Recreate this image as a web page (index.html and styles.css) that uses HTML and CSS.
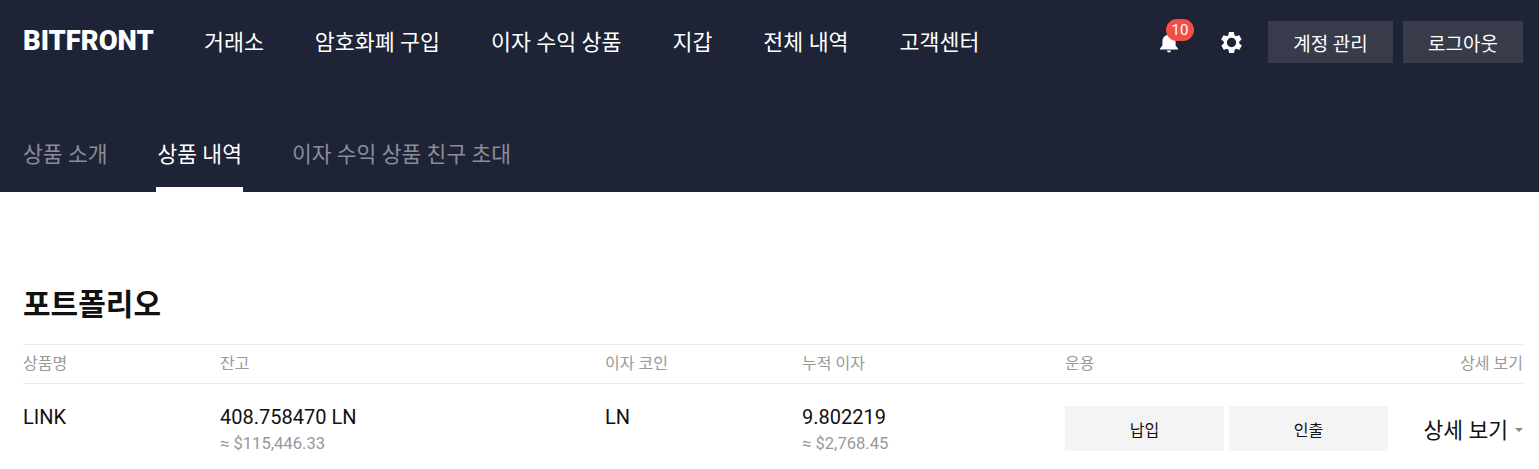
FILE: index.html
```html
<!DOCTYPE html>
<html lang="ko">
<head>
  <meta charset="UTF-8">
  <title>BITFRONT</title>
  <link rel="stylesheet" href="styles.css">
</head>
<body>

<header class="header">
  <div class="topbar">
    <a class="logo">BITFRONT</a>
    <nav class="mainnav">
      <a>거래소</a>
      <a>암호화폐 구입</a>
      <a>이자 수익 상품</a>
      <a>지갑</a>
      <a>전체 내역</a>
      <a>고객센터</a>
    </nav>
    <div class="tools">
      <div class="bell">
        <svg width="22" height="22" viewBox="0 0 22 22"><path fill="#fff" d="M11 1.5a2 2 0 0 1 2 2v.6c3 .8 4.6 3.3 4.6 6.4v4l2.4 3v1H2v-1l2.4-3v-4c0-3.100 1.600-5.600 4.600-6.400v-.6a2 2 0 0 1 2-2zM9 19.500h4a2 2 0 0 1-4 0z"/></svg>
        <span class="badge">10</span>
      </div>
      <svg class="gear" width="25" height="25" viewBox="0 0 24 24"><path fill="#fff" fill-rule="evenodd" d="M19.400 13a7.600 7.600 0 0 0 0-2l2.100-1.600a.5.500 0 0 0 .1-.6l-2-3.500a.5.500 0 0 0-.6-.2l-2.500 1a7.300 7.300 0 0 0-1.700-1l-.4-2.700a.5.500 0 0 0-.5-.4h-4a.5.500 0 0 0-.5.400l-.4 2.700a7.300 7.300 0 0 0-1.700 1l-2.500-1a.5.500 0 0 0-.6.2l-2 3.500a.5.500 0 0 0 .1.600L4.600 11a7.600 7.600 0 0 0 0 2l-2.100 1.600a.5.500 0 0 0-.1.600l2 3.500c.1.200.4.300.6.200l2.500-1c.5.400 1.100.700 1.700 1l.4 2.700c0 .2.200.4.500.4h4c.3 0 .5-.2.500-.4l.4-2.700c.6-.3 1.200-.6 1.700-1l2.500 1c.2.100.5 0 .6-.2l2-3.500a.5.500 0 0 0-.1-.6zM12 16.500a4.500 4.500 0 1 1 0-9 4.500 4.500 0 0 1 0 9z"/></svg>
      <button class="topbtn account">계정 관리</button>
      <button class="topbtn logout">로그아웃</button>
    </div>
  </div>
  <div class="subnav">
    <a>상품 소개</a>
    <a class="active">상품 내역</a>
    <a>이자 수익 상품 친구 초대</a>
  </div>
</header>

<section class="portfolio">
  <h2>포트폴리오</h2>
  <div class="row head">
    <div>상품명</div>
    <div>잔고</div>
    <div>이자 코인</div>
    <div>누적 이자</div>
    <div>운용</div>
    <div class="right">상세 보기</div>
  </div>
  <div class="row item">
    <div class="name">LINK</div>
    <div>
      <div class="amount">408.758470 LN</div>
      <div class="usd">≈ $115,446.33</div>
    </div>
    <div class="name">LN</div>
    <div>
      <div class="amount">9.802219</div>
      <div class="usd">≈ $2,768.45</div>
    </div>
    <div class="actions">
      <button>납입</button>
      <button>인출</button>
    </div>
    <div class="detail">상세 보기<span class="caret"></span></div>
  </div>
</section>

</body>
</html>
```

FILE: styles.css
```css
* { box-sizing: border-box; }
body {
  margin: 0;
  font-family: Roboto, "Noto Sans CJK KR", sans-serif;
  color: #111;
  background: #fff;
  overflow: hidden;
}

.header {
  height: 192px;
  background: #1e2436;
  color: #fff;
  padding: 0 16px 0 23px;
}

.topbar {
  display: flex;
  align-items: center;
  height: 84px;
}

.logo {
  width: 181px;
  margin-top: -3px;
  font-size: 27.4px;
  font-weight: 900;
  line-height: 32px;
}

.mainnav {
  display: flex;
  gap: 51px;
  margin-top: -4px;
  font-size: 21.7px;
}

.tools {
  display: flex;
  align-items: center;
  margin-left: auto;
}

.bell {
  position: relative;
  width: 22px;
  height: 22px;
  margin-right: 39px;
}

.badge {
  position: absolute;
  top: -12px;
  left: 8px;
  width: 28px;
  height: 22px;
  border-radius: 11px;
  background: #f44f44;
  font-size: 15px;
  line-height: 22px;
  text-align: center;
}

.gear { margin-right: 24px; }

.topbtn {
  height: 42px;
  border: none;
  background: #383b4a;
  color: #fff;
  font: inherit;
  font-size: 19px;
}

.account { width: 125px; margin-right: 10px; }
.logout { width: 120px; }

.subnav {
  display: flex;
  gap: 50px;
  height: 108px;
  padding-top: 52px;
  font-size: 21.5px;
  color: #8a8d98;
}

.subnav a {
  height: 56px;
  line-height: 38px;
}

.subnav a.active {
  padding: 0 1px;
  margin-left: -1px;
  margin-right: -1px;
  color: #fff;
  border-bottom: 5px solid #fff;
}

.portfolio { padding: 95px 16px 0 23px; }

h2 {
  margin: 0;
  height: 57px;
  font-size: 30px;
  font-weight: 700;
  line-height: 36px;
}

.row {
  display: grid;
  grid-template-columns: 197px 385px 197px 263px 1fr;
}

.head {
  grid-template-columns: 197px 385px 197px 263px 1fr 100px;
  height: 40px;
  border-top: 1px solid #ececec;
  border-bottom: 1px solid #ececec;
  font-size: 16px;
  line-height: 37px;
  color: #999;
}

.right { text-align: right; }

.item {
  grid-template-columns: 197px 385px 197px 263px auto 1fr;
  padding-top: 22px;
}

.name {
  font-size: 20px;
  line-height: 22px;
}

.amount {
  font-size: 20px;
  line-height: 22px;
}

.usd {
  margin-top: 5px;
  font-size: 16.6px;
  line-height: 22px;
  color: #999;
}

.actions {
  display: flex;
  gap: 5px;
}

.actions button {
  width: 159px;
  height: 45px;
  border: none;
  background: #f4f4f4;
  color: #111;
  font: inherit;
  font-size: 16px;
}

.detail {
  display: flex;
  align-items: center;
  justify-content: flex-end;
  height: 45px;
  font-size: 21.5px;
}

.caret {
  width: 0;
  height: 0;
  margin-left: 7px;
  margin-top: 3px;
  border-left: 4px solid transparent;
  border-right: 4px solid transparent;
  border-top: 4px solid #888;
}
```
